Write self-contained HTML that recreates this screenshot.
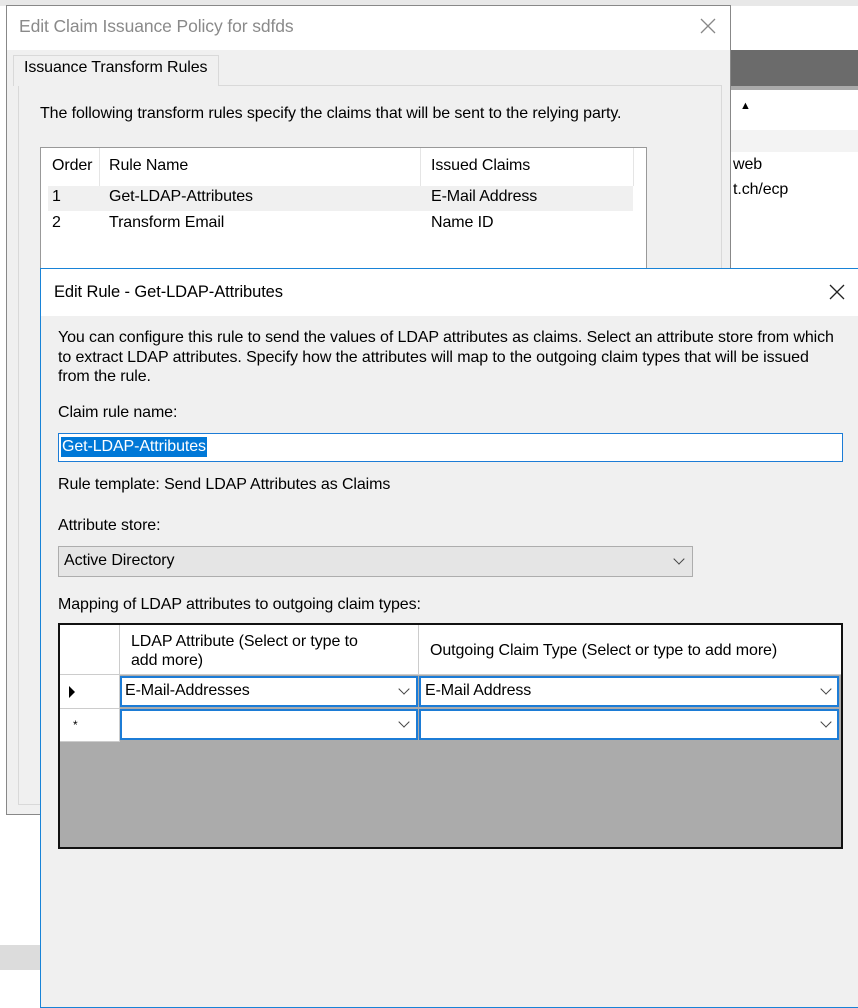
<!DOCTYPE html>
<html><head><meta charset="utf-8"><style>
*{margin:0;padding:0;box-sizing:border-box}
body{width:858px;height:999px;position:relative;overflow:hidden;background:#fff;font-family:"Liberation Sans",sans-serif;font-size:16px;color:#000;letter-spacing:-0.1px}
.a{position:absolute;white-space:nowrap}
.chev{position:absolute;width:8px;height:8px;border-right:1.3px solid #444;border-bottom:1.3px solid #444;transform:rotate(45deg)}
</style></head><body>
<div class="a" style="left:0;top:0;width:858px;height:6px;background:#e8e8e8"></div>
<div class="a" style="left:731px;top:50px;width:127px;height:36px;background:#6b6b6b"></div>
<div class="a" style="left:731px;top:86px;width:127px;height:4px;background:#aaa"></div>
<div class="a" style="left:731px;top:130px;width:127px;height:22px;background:#f3f3f3"></div>
<div class="a" style="left:740px;top:100px;font-size:11px">▲</div>
<div class="a" style="left:733px;top:156px">web</div>
<div class="a" style="left:733px;top:181px">t.ch/ecp</div>
<div class="a" style="left:0;top:945px;width:40px;height:25px;background:#dcdcdc"></div>
<div class="a" style="left:6px;top:5px;width:725px;height:810px;background:#f0f0f0;border:1px solid #888"></div>
<div class="a" style="left:7px;top:6px;width:723px;height:44px;background:#fff"></div>
<div class="a" style="left:19px;top:16px;font-size:17.5px;color:#8a8a8a">Edit Claim Issuance Policy for sdfds</div>
<svg class="a" style="left:700px;top:18px" width="16" height="16"><path d="M1 1L15 15M15 1L1 15" stroke="#888" stroke-width="1.3"/></svg>
<div class="a" style="left:18px;top:85px;width:704px;height:720px;background:#f0f0f0;border:1px solid #d9d9d9"></div>
<div class="a" style="left:13px;top:55px;width:206px;height:31px;background:#f0f0f0;border:1px solid #d9d9d9;border-bottom:none"></div>
<div class="a" style="left:24px;top:59px">Issuance Transform Rules</div>
<div class="a" style="left:40px;top:105px">The following transform rules specify the claims that will be sent to the relying party.</div>
<div class="a" style="left:40px;top:147px;width:607px;height:125px;background:#fff;border:1px solid #999"></div>
<div class="a" style="left:99px;top:148px;width:1px;height:38px;background:#e5e5e5"></div>
<div class="a" style="left:420px;top:148px;width:1px;height:38px;background:#e5e5e5"></div>
<div class="a" style="left:633px;top:148px;width:1px;height:38px;background:#e5e5e5"></div>
<div class="a" style="left:52px;top:157px">Order</div>
<div class="a" style="left:109px;top:157px">Rule Name</div>
<div class="a" style="left:431px;top:157px">Issued Claims</div>
<div class="a" style="left:48px;top:186px;width:585px;height:25px;background:#f0f0f0"></div>
<div class="a" style="left:52px;top:188px">1</div>
<div class="a" style="left:109px;top:188px">Get-LDAP-Attributes</div>
<div class="a" style="left:431px;top:188px">E-Mail Address</div>
<div class="a" style="left:52px;top:214px">2</div>
<div class="a" style="left:109px;top:214px">Transform Email</div>
<div class="a" style="left:431px;top:214px">Name ID</div>
<div class="a" style="left:40px;top:268px;width:830px;height:740px;background:#f0f0f0;border:1px solid #1883d7"></div>
<div class="a" style="left:41px;top:269px;width:817px;height:47px;background:#fff"></div>
<div class="a" style="left:54px;top:283px;font-size:16.5px">Edit Rule - Get-LDAP-Attributes</div>
<svg class="a" style="left:829px;top:284px" width="16" height="16"><path d="M1 1L15 15M15 1L1 15" stroke="#222" stroke-width="1.3"/></svg>
<div class="a" style="left:58px;top:328px;line-height:19.5px">You can configure this rule to send the values of LDAP attributes as claims. Select an attribute store from which<br>to extract LDAP attributes. Specify how the attributes will map to the outgoing claim types that will be issued<br>from the rule.</div>
<div class="a" style="left:58px;top:404px">Claim rule name:</div>
<div class="a" style="left:58px;top:433px;width:785px;height:29px;background:#fff;border:1px solid #1c7cd6"></div>
<div class="a" style="left:61px;top:437px;height:20px;padding:0 1px;background:#0078d7;color:#fff;line-height:20px">Get-LDAP-Attributes</div>
<div class="a" style="left:58px;top:476px">Rule template: Send LDAP Attributes as Claims</div>
<div class="a" style="left:58px;top:517px">Attribute store:</div>
<div class="a" style="left:58px;top:546px;width:635px;height:31px;background:#e5e5e5;border:1px solid #adadad"></div>
<div class="a" style="left:64px;top:552px">Active Directory</div>
<div class="chev" style="left:675px;top:555px"></div>
<div class="a" style="left:58px;top:596px">Mapping of LDAP attributes to outgoing claim types:</div>
<div class="a" style="left:58px;top:623px;width:785px;height:226px;background:#ababab;border:2px solid #111"></div>
<div class="a" style="left:60px;top:625px;width:781px;height:49px;background:#fff"></div>
<div class="a" style="left:60px;top:674px;width:59px;height:68px;background:#fff"></div>
<div class="a" style="left:119px;top:625px;width:1px;height:117px;background:#ccc"></div>
<div class="a" style="left:418px;top:625px;width:1px;height:49px;background:#ccc"></div>
<div class="a" style="left:60px;top:674px;width:781px;height:1px;background:#ccc"></div>
<div class="a" style="left:60px;top:708px;width:59px;height:1px;background:#ccc"></div>
<div class="a" style="left:60px;top:741px;width:59px;height:1px;background:#ccc"></div>
<div class="a" style="left:131px;top:632px;line-height:19px">LDAP Attribute (Select or type to<br>add more)</div>
<div class="a" style="left:430px;top:642px">Outgoing Claim Type (Select or type to add more)</div>
<div class="a" style="left:69px;top:686px;width:0;height:0;border-left:6px solid #000;border-top:6px solid transparent;border-bottom:6px solid transparent"></div>
<div class="a" style="left:73px;top:718px;font-size:12px">*</div>
<div class="a" style="left:120px;top:676px;width:298px;height:31px;background:#fff;border:2px solid #1c7cd6"></div>
<div class="a" style="left:419px;top:676px;width:420px;height:31px;background:#fff;border:2px solid #1c7cd6"></div>
<div class="a" style="left:120px;top:709px;width:298px;height:31px;background:#fff;border:2px solid #1c7cd6"></div>
<div class="a" style="left:419px;top:709px;width:420px;height:31px;background:#fff;border:2px solid #1c7cd6"></div>
<div class="a" style="left:125px;top:682px">E-Mail-Addresses</div>
<div class="a" style="left:425px;top:682px">E-Mail Address</div>
<div class="chev" style="left:400px;top:685px"></div>
<div class="chev" style="left:822px;top:685px"></div>
<div class="chev" style="left:400px;top:718px"></div>
<div class="chev" style="left:822px;top:718px"></div>
</body></html>
